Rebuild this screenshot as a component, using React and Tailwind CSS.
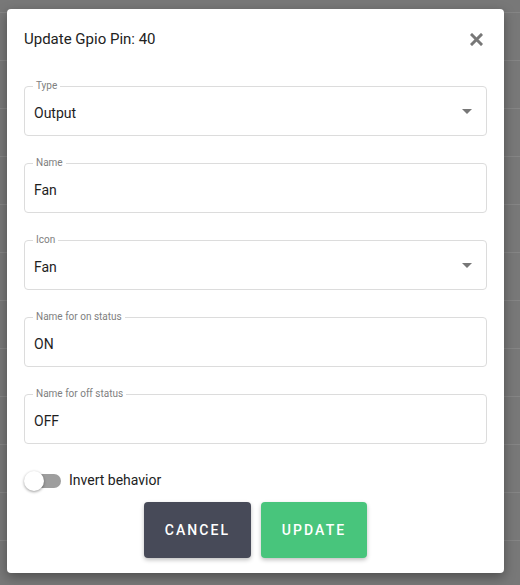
import React, { useState } from "react";

const rows = Array.from({ length: 13 });

const Field = ({ label, value, select }) => (
  <div className="relative h-[50px] rounded-[4px] border border-[#dcdcdc]">
    <span className="absolute -top-[7px] left-[8px] bg-white px-[3px] text-[10px] leading-[12px] text-[#808080]">
      {label}
    </span>
    <div className="flex h-full items-center pl-[9px] pr-[14px] pt-[5px]">
      <span className="flex-1 text-[14px] text-[#1e1e1e]">{value}</span>
      {select && (
        <svg width="10" height="5" viewBox="0 0 10 5" className="mt-[-5px]">
          <path d="M0 0h10L5 5z" fill="#777" />
        </svg>
      )}
    </div>
  </div>
);

export default function App() {
  const [invert, setInvert] = useState(false);
  return (
    <div className="relative h-[585px] w-[520px] overflow-hidden bg-[#787878] font-['Roboto',sans-serif]">
      {/* dimmed table behind the dialog */}
      <div className="flex flex-col pt-[12px]">
        {rows.map((_, i) => (
          <div key={i} className="h-[48px] border-t border-[#858585]" />
        ))}
      </div>

      <div className="absolute left-[7px] top-[9px] flex h-[564px] w-[497px] flex-col rounded-[4px] bg-white px-[17px] shadow-[0_4px_12px_rgba(0,0,0,0.35)]">
        <div className="flex items-center pt-[18px]">
          <h2 className="flex-1 text-[15px] leading-[24px] text-[#222]">Update Gpio Pin: 40</h2>
          <button className="mr-[4px] text-[#777]">
            <svg width="13" height="13" viewBox="0 0 13 13">
              <path d="M2 2l9 9M11 2l-9 9" stroke="#777" strokeWidth="3" strokeLinecap="square" />
            </svg>
          </button>
        </div>

        <div className="mt-[35px] flex flex-col gap-[27px]">
          <Field label="Type" value="Output" select />
          <Field label="Name" value="Fan" />
          <Field label="Icon" value="Fan" select />
          <Field label="Name for on status" value="ON" />
          <Field label="Name for off status" value="OFF" />
        </div>

        <div className="mt-[26px] flex items-center gap-[8px]">
          <button
            onClick={() => setInvert(!invert)}
            className="relative h-[20px] w-[37px]"
          >
            <span className="absolute left-[6px] top-[3px] h-[14px] w-[31px] rounded-full bg-[#9e9e9e]" />
            <span className="absolute left-0 top-0 h-[20px] w-[20px] rounded-full bg-white shadow-[0_1px_3px_rgba(0,0,0,0.4)]" />
          </button>
          <span className="text-[14px] text-[#222]">Invert behavior</span>
        </div>

        <div className="mt-[11px] flex justify-center gap-[10px]">
          <button className="h-[56px] w-[107px] rounded-[4px] bg-[#474a58] text-[14px] font-medium tracking-[0.15em] text-white shadow-[0_2px_4px_rgba(0,0,0,0.25)]">
            CANCEL
          </button>
          <button className="h-[56px] w-[106px] rounded-[4px] bg-[#48c57c] text-[14px] font-medium tracking-[0.15em] text-white shadow-[0_2px_4px_rgba(0,0,0,0.25)]">
            UPDATE
          </button>
        </div>
      </div>
    </div>
  );
}
